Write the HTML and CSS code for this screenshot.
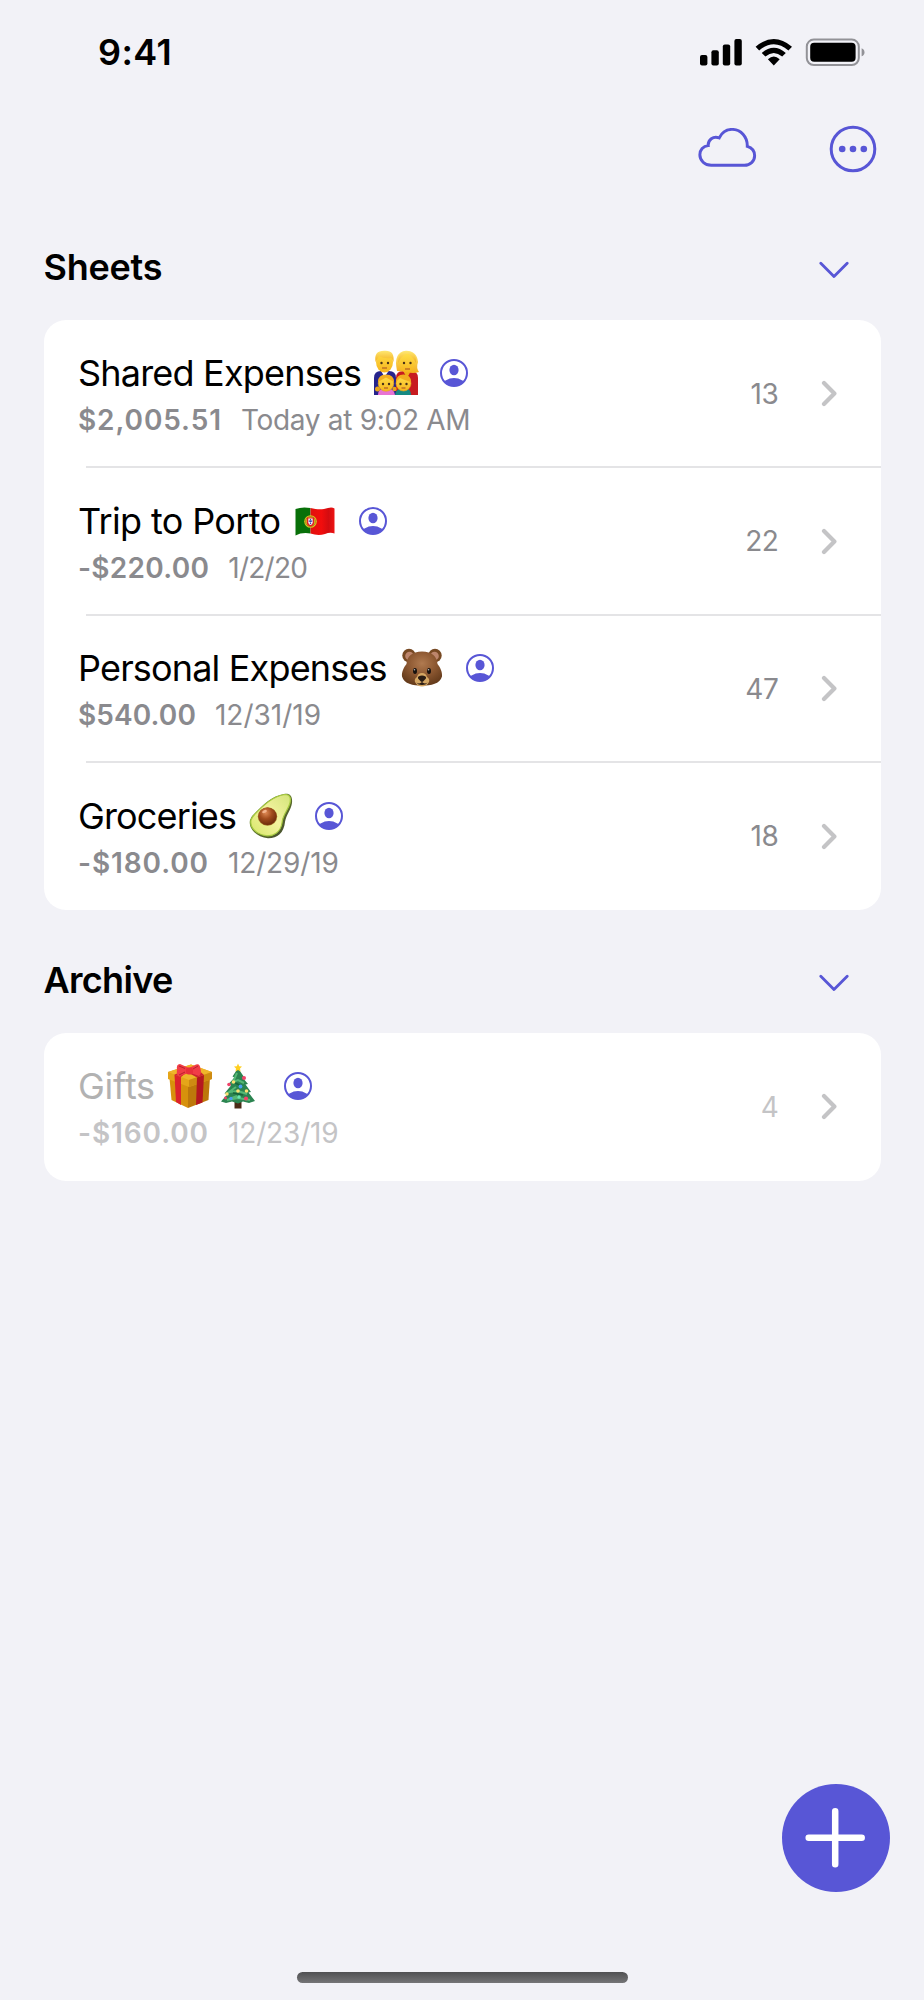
FILE: index.html
```html
<!DOCTYPE html>
<html lang="en">
<head>
<meta charset="utf-8">
<title>Sheets</title>
<link rel="stylesheet" href="styles.css">
</head>
<body>
<svg class="defs" width="0" height="0" aria-hidden="true">
  <defs>
    <symbol id="person" viewBox="0 0 28 28">
      <clipPath id="pc"><circle cx="14" cy="14" r="13"/></clipPath>
      <circle cx="14" cy="14" r="13" fill="none" stroke="#5856d6" stroke-width="2"/>
      <ellipse cx="14" cy="11" rx="4.6" ry="5.2" fill="#5856d6"/>
      <ellipse cx="14" cy="27" rx="11.2" ry="8" fill="#5856d6" clip-path="url(#pc)"/>
    </symbol>
    <symbol id="down" viewBox="0 0 30 18"><path d="M1.8 2.2 15 15.6 28.2 2.2" fill="none" stroke="#5856d6" stroke-width="2.8" stroke-linecap="round" stroke-linejoin="round"/></symbol>
    <symbol id="next" viewBox="0 0 16 27"><path d="M3 3 13.4 13.5 3 24" fill="none" stroke="#c4c4c6" stroke-width="4.2" stroke-linecap="round" stroke-linejoin="round"/></symbol>
    <linearGradient id="skin" x2="0" y2="1"><stop stop-color="#ffdf4a"/><stop offset="1" stop-color="#f6b41d"/></linearGradient>
    <linearGradient id="hair" x2="0" y2="1"><stop stop-color="#ffe873"/><stop offset="1" stop-color="#f3ae1c"/></linearGradient>
    <linearGradient id="flagr"><stop stop-color="#e0100d"/><stop offset=".45" stop-color="#f20d0d"/><stop offset=".75" stop-color="#d30c10"/><stop offset="1" stop-color="#ee1414"/></linearGradient>
    <radialGradient id="fur" cx=".5" cy=".35" r=".65"><stop stop-color="#b07a50"/><stop offset=".5" stop-color="#8f5a33"/><stop offset="1" stop-color="#663c1c"/></radialGradient>
    <radialGradient id="pit" cx=".4" cy=".3" r=".7"><stop stop-color="#e08a55"/><stop offset=".5" stop-color="#a14c1d"/><stop offset="1" stop-color="#6d2c0c"/></radialGradient>
    <linearGradient id="flesh" x1="1" y1="0" x2="0" y2="1"><stop stop-color="#d3e47a"/><stop offset=".5" stop-color="#f4f3a0"/><stop offset="1" stop-color="#d6e667"/></linearGradient>
    <linearGradient id="peel" x2="1" y2="1"><stop stop-color="#7da52c"/><stop offset=".55" stop-color="#5a6c2b"/><stop offset="1" stop-color="#3f4330"/></linearGradient>
  </defs>
</svg>
<div class="screen">
  <header class="status">
    <span class="time">9:41</span>
    <svg class="signals" viewBox="0 0 168 30" width="168" height="30">
      <rect x="1" y="18" width="7.4" height="10.5" rx="2"/><rect x="12.4" y="13.2" width="7.4" height="15.3" rx="2"/><rect x="23.8" y="7.6" width="7.4" height="20.9" rx="2"/><rect x="35.4" y="2" width="7.4" height="26.5" rx="2"/>
      <path d="M56.6 9.8Q74.8-5.6 93 9.8L89.4 13.4Q74.8.9 60.2 13.4ZM62.8 16Q74.8 5.6 86.8 16L83.2 19.6Q74.8 12.4 66.4 19.6ZM68.9 22.2Q74.8 17 80.7 22.2L74.8 28.4Z"/>
      <rect x="107.8" y="2.600" width="52" height="25.4" rx="7" fill="none" stroke="#929297" stroke-width="2"/>
      <rect x="111.2" y="5.8" width="45.4" height="19" rx="4"/>
      <path d="M162.6 11.2Q165.500 12.2 165.500 15.2T162.6 19.3Z" fill="#929297"/>
    </svg>
  </header>
  <nav class="tools">
    <svg viewBox="0 0 60 42" width="60" height="42"><path transform="translate(0 -1) scale(1.02 1)" d="M14 38.3H46.5C52 38.3 56.5 34.3 56.5 28.8 56.5 24 53.5 20.6 49.3 19.4 49.6 9.5 42.8 2.4 34.3 2.4 29 2.4 24.3 5.6 21.8 10.9 15.8 8.8 10.7 12.6 11 18.6 6 18.9 2.8 22.8 2.8 27.7 2.8 33.5 7.6 38.3 14 38.3Z" fill="none" stroke="#5856d6" stroke-width="2.9"/></svg>
    <svg viewBox="0 0 48 48" width="48" height="48"><circle cx="24" cy="24" r="21.8" fill="none" stroke="#5856d6" stroke-width="3"/><g fill="#5856d6"><circle cx="13.2" cy="24" r="3.3"/><circle cx="24" cy="24" r="3.3"/><circle cx="34.8" cy="24" r="3.3"/></g></svg>
  </nav>

  <section>
    <div class="head"><h2 class="h-sheets">Sheets</h2><svg width="30" height="18"><use href="#down"/></svg></div>
    <div class="card">
      <article class="row">
        <div class="info">
          <div class="title"><span class="name t1">Shared Expenses</span>
            <svg class="emoji" viewBox="0 0 46 46" width="46" height="46">
              <path d="M1 45V28Q1 21 8 21H16Q23 21 23 28V45Z" fill="#26248c"/><path d="M23 45V28Q23 21 30 21H38Q45 21 45 28V45Z" fill="#c71b20"/>
              <path d="M7 19 11.500 27 17 19Z" fill="#fff"/><path d="M29 19H39L34 28Z" fill="#f0ae1a"/>
              <path d="M24 21Q20 2 33 .8 44 1 45 12 43 18 46 22Q40 24 34 22Z" fill="url(#hair)"/>
              <ellipse cx="11.500" cy="12" rx="8.500" ry="10.500" fill="url(#skin)"/><path d="M2.500 12Q.5.5 11.500.7 22 0 20.500 12L18.500 8Q11 9 6 6Z" fill="url(#hair)"/>
              <ellipse cx="34" cy="13" rx="7.800" ry="9.500" fill="url(#skin)"/><path d="M25.500 13Q27 7 34 3 40 7 43 13 44 2 34 1 24 2 25.500 13Z" fill="url(#hair)"/>
              <path d="M5 45Q5 38 13 38T22 45Z" fill="#e873d3"/><path d="M22 45Q23 38 30.500 38T38 45Z" fill="#168a83"/>
              <circle cx="4.500" cy="39" r="2.500" fill="#e9a51a"/><circle cx="21.500" cy="39" r="2.200" fill="#e9a51a"/>
              <circle cx="13" cy="33.500" r="7.800" fill="url(#skin)" stroke="#e3a31b" stroke-width=".6"/><circle cx="30.500" cy="33.500" r="7.500" fill="url(#skin)" stroke="#e3a31b" stroke-width=".6"/>
              <path d="M5 32Q5 24.500 13 24.500T21 32L13 27.500Z" fill="#f2ae20"/><path d="M23 32Q23 24.500 30.500 24.500T38 32Q31 30 27 28Z" fill="#f2ae20"/>
              <g fill="#473017"><circle cx="8.500" cy="13" r="1.200"/><circle cx="15" cy="13" r="1.200"/><circle cx="31" cy="13" r="1.200"/><circle cx="37.500" cy="13" r="1.200"/><circle cx="10" cy="34" r="1.200"/><circle cx="16" cy="34" r="1.200"/><circle cx="27.500" cy="34" r="1.200"/><circle cx="33.500" cy="34" r="1.200"/></g>
              <path d="M9 18H14M32 19H37M11 38H15M28.500 38H32.500" stroke="#a34b22" stroke-width="1.200"/>
            </svg><svg class="person" width="28" height="28"><use href="#person"/></svg></div>
          <div class="sub"><b class="a1">$2,005.51</b><span class="d1">Today at 9:02 AM</span></div>
        </div>
        <span class="count">13</span><svg width="16" height="27"><use href="#next"/></svg>
      </article>
      <article class="row">
        <div class="info">
          <div class="title"><span class="name t2">Trip to Porto</span>
            <svg class="emoji" viewBox="0 0 46 46" width="46" height="46">
              <path d="M3.500 11Q10 8.500 18.500 10V35.500Q10 34 3.500 37.500Z" fill="#087009"/>
              <path d="M18.500 10C25 11.500 30 12 36 10Q40 8.800 42.500 10.500V35.500Q38 34 33 36 26 38 18.500 35.500Z" fill="url(#flagr)"/>
              <circle cx="18.500" cy="23.500" r="6.300" fill="#d9c722"/><circle cx="18.500" cy="23.500" r="5" fill="none" stroke="#a87d10" stroke-width=".8"/>
              <path d="M14.800 19.500H22.200V24.500Q22 28 18.500 28.500 15 28 14.800 24.500Z" fill="#e31d24"/><path d="M16.300 20.500H20.700V24.500Q20.500 26.500 18.500 27 16.500 26.500 16.300 24.500Z" fill="#f5f5fa"/><path d="M18.500 21V26M16.800 23.200H20.200" stroke="#3944a5" stroke-width="1.200" stroke-dasharray="1.500 .5"/>
            </svg><svg class="person" width="28" height="28"><use href="#person"/></svg></div>
          <div class="sub"><b class="a2">-$220.00</b><span class="d2">1/2/20</span></div>
        </div>
        <span class="count">22</span><svg width="16" height="27"><use href="#next"/></svg>
      </article>
      <article class="row">
        <div class="info">
          <div class="title"><span class="name t3">Personal Expenses</span>
            <svg class="emoji" viewBox="0 0 46 46" width="46" height="46">
              <circle cx="10" cy="10.500" r="6.700" fill="#774923"/><circle cx="36" cy="10.500" r="6.700" fill="#774923"/><circle cx="10.500" cy="11" r="4.300" fill="#bd856c"/><circle cx="35.500" cy="11" r="4.300" fill="#bd856c"/>
              <path d="M23 6.500C33 6.500 38 11.500 38.500 19 41 22 43.500 27 43 31.500 41 39 32 40.500 23 40.500S5 39 3 31.500C2.500 27 5 22 7.500 19 8 11.500 13 6.500 23 6.500Z" fill="url(#fur)"/>
              <path d="M23 28Q27 28 28 32 31 34 30 37 27.500 41.500 23 41.500T16 37Q15 34 18 32 19 28 23 28Z" fill="#d5a764"/>
              <path d="M19.500 31.500Q23 29.500 26.500 31.500 28 33 25.500 35 24 37 23 37T20.500 35Q18 33 19.500 31.500ZM17.500 37.500Q20.500 39.500 23 37 25.500 39.500 28.500 37.500 27 40 23 40T17.500 37.500Z" fill="#2a1c14"/>
              <ellipse cx="16" cy="26" rx="2" ry="3" fill="#17110e"/><ellipse cx="30" cy="26" rx="2" ry="3" fill="#17110e"/><circle cx="15.500" cy="24.800" r=".8" fill="#bbb"/><circle cx="29.500" cy="24.800" r=".8" fill="#bbb"/>
            </svg><svg class="person" width="28" height="28"><use href="#person"/></svg></div>
          <div class="sub"><b class="a3">$540.00</b><span class="d3">12/31/19</span></div>
        </div>
        <span class="count">47</span><svg width="16" height="27"><use href="#next"/></svg>
      </article>
      <article class="row">
        <div class="info">
          <div class="title"><span class="name t4">Groceries</span>
            <svg class="emoji" viewBox="0 0 46 46" width="46" height="46">
              <path d="M7 20C15 12 23 3 37 .8 43 .5 44.500 4 44 10 43 17 38 22 37 29 36 40 29 45.500 20 45.300 9 44 0 36 2 27Q3 23 7 20Z" fill="url(#peel)"/>
              <path d="M7.500 20.500C16 12 25 3 37 1.500 42 1.500 43 4.500 42 10 40 17 34.500 22 34 30 32.500 39 26 43.500 18 42.700 9 41.500 1.500 35 3 27Q4 24 7.500 20.500Z" fill="url(#flesh)" stroke="#a9cc42" stroke-width="1.200"/>
              <ellipse cx="19.500" cy="23.500" rx="9.700" ry="9.300" fill="#9f6b24"/><ellipse cx="19.500" cy="23.300" rx="9" ry="8.800" fill="url(#pit)"/><ellipse cx="16.500" cy="18.500" rx="2.500" ry="1.500" fill="#f3b48c" transform="rotate(-25 16.500 18.500)"/>
            </svg><svg class="person" width="28" height="28"><use href="#person"/></svg></div>
          <div class="sub"><b class="a4">-$180.00</b><span class="d4">12/29/19</span></div>
        </div>
        <span class="count">18</span><svg width="16" height="27"><use href="#next"/></svg>
      </article>
    </div>
  </section>

  <section>
    <div class="head second"><h2 class="h-archive">Archive</h2><svg width="30" height="18"><use href="#down"/></svg></div>
    <div class="card">
      <article class="row archived">
        <div class="info">
          <div class="title"><span class="name t5">Gifts</span>
            <svg class="emoji" viewBox="0 0 46 46" width="46" height="46">
              <path d="M2.500 15 21 21V45L4.500 37Z" fill="#d7910c"/><path d="M21 20 43 14 41.500 37 21 45Z" fill="#bd780b"/>
              <path d="M1 9 24 1.500 45 9V16L22 24 1 16Z" fill="#e5a519"/><path d="M1 9 22 17 45 9 24 1.500Z" fill="#efb52a"/><path d="M22 17 45 9V16L22 24Z" fill="#ce8b12"/>
              <path d="M7.500 11.500 14 14V42L9 39Z" fill="#dc222d"/><path d="M30 14.500 37 12 35.500 39.500 29 42Z" fill="#b5171f"/><path d="M7.500 11.500 28 4 37 12 30 14.500 20 9 14 14Z" fill="#cb2430"/>
              <path d="M22 5 13 1Q9 1 10 7 9 12 12 13.500L20 10.500H25L32 13Q35 10 33.500 6 33 0 29 1.500Z" fill="#f13d46"/><path d="M18 5.500 12 3M26 6 31 3M18 9 12 12" stroke="#b9222d" stroke-width="1"/><rect x="19" y="4.500" width="7" height="7" rx="2.500" fill="#e82f3b"/>
            </svg><svg class="emoji tree" viewBox="0 0 46 46" width="46" height="46">
              <path d="M19.500 36H26.500V45.500H19.500Z" fill="#4c2a16"/>
              <path d="M23 5 29 14 27.500 14.500 33 21 30.500 21.500 36 29 33.500 29.500 40 38 34 40 28 38.500 23 40.500 17 38.500 11 40 6 38.500 12.500 31 9.500 30.500 16 22.500 13 21.500 19.500 14.500 17.500 13.500Z" fill="#2b8450"/>
              <path d="M22 10 18 19 23 17 29 20M21 24 14 29 23 28 32 31M22 33 12 37 23 35 35 37" fill="none" stroke="#55b875" stroke-width="2"/><path d="M20 20 27 23M18 30 28 32" stroke="#17643a" stroke-width="1.600"/>
              <path d="M23 .5 24.200 3.200 27 3.500 25 5.600 25.500 8.500 23 7 20.500 8.500 21 5.600 19 3.500 21.800 3.200Z" fill="#ffcf20"/>
              <g fill="#f0446a"><circle cx="29" cy="15" r="2"/><circle cx="14" cy="21.500" r="1.800"/><circle cx="31" cy="35.500" r="2.100"/><circle cx="10.500" cy="35" r="1.400"/></g><g fill="#ffdf72"><circle cx="18.500" cy="19" r="1.800"/><circle cx="23" cy="28" r="1.800"/><circle cx="31.500" cy="28" r="1.800"/><circle cx="12" cy="31" r="1.700"/></g><g fill="#4b9ff0"><circle cx="25.500" cy="23.500" r="1.900"/><circle cx="16" cy="35.500" r="1.700"/></g><circle cx="24" cy="34" r="1.800" fill="#6be6b0"/>
            </svg><svg class="person" width="28" height="28"><use href="#person"/></svg></div>
          <div class="sub"><b class="a5">-$160.00</b><span class="d5">12/23/19</span></div>
        </div>
        <span class="count">4</span><svg width="16" height="27"><use href="#next"/></svg>
      </article>
    </div>
  </section>
  <footer>
    <button class="add" aria-label="Add sheet"><svg viewBox="0 0 108 108" width="108" height="108"><path d="M26.700 53.800H79.700M53.200 27.300V80.300" stroke="#fff" stroke-width="6.500" stroke-linecap="round"/></svg></button>
    <div class="home"></div>
  </footer>
</div>
</body>
</html>
```
FILE: styles.css
```css
* { box-sizing: border-box; }
body { margin: 0; background: #f2f2f7; font-family: Inter, "Liberation Sans", sans-serif; color: #000; }
svg { display: block; flex: none; }
.defs { position: absolute; }
.screen { width: 924px; height: 2000px; display: flex; flex-direction: column; }
.status { display: flex; justify-content: space-between; align-items: center; padding: 37px 57px 0 98px; height: 67px; }
.time { font-size: 36px; font-weight: 600; line-height: 30px; letter-spacing: .4px; }
.tools { display: flex; justify-content: flex-end; align-items: center; gap: 72px; height: 48px; margin-top: 58px; padding-right: 47px; }
.head { display: flex; justify-content: space-between; align-items: center; height: 44px; margin: 72px 75.5px 0 43.5px; padding-top: 3px; }
.head h2 { margin: -4px 0 0; font-size: 36px; font-weight: 600; line-height: 44px; }
.h-sheets { letter-spacing: -.25px; }
.h-archive { letter-spacing: -.7px; }
.head svg { margin-top: 2px; }
.card { margin: 31px 43.5px 0 43.5px; background: #fff; border-radius: 22px; }
.row { position: relative; display: flex; align-items: center; height: 147.5px; padding-right: 44px; }
.row + .row::before { content: ""; position: absolute; left: 42.5px; right: 0; top: -1.5px; height: 2px; background: #e4e4e6; }
.info { flex: 1; align-self: flex-start; padding: 31px 0 0 34.5px; }
.title { display: flex; align-items: center; height: 44px; }
.name { font-size: 36px; line-height: 44px; white-space: nowrap; }
.t1 { letter-spacing: -.8px; }
.t2 { letter-spacing: -.65px; }
.t3 { letter-spacing: -.83px; }
.t4 { letter-spacing: -.85px; }
.t5 { letter-spacing: -.25px; }
.emoji { margin-left: 12px; }
.tree { margin-left: 2px; }
.person { margin-left: 21px; }
.archived .person { margin-left: 23px; }
.sub { display: flex; gap: 19px; margin-top: 7px; font-size: 28px; line-height: 36px; color: #8a8a8e; white-space: nowrap; }
.sub b { font-weight: 600; letter-spacing: .9px; }
.sub .a2 { letter-spacing: .3px; }
.sub .a3 { letter-spacing: .1px; }
.d1 { letter-spacing: -.3px; }
.d2 { letter-spacing: -.75px; }
.d4, .d5 { letter-spacing: -.15px; }
.count { font-size: 28px; color: #8a8a8e; margin-right: 42px; letter-spacing: -.4px; }
.archived .name { color: #b2b2b2; }
.archived .sub, .archived .count { color: #c4c4c6; }
.second { margin-top: 48px; }
footer { margin-top: auto; display: flex; flex-direction: column; align-items: center; padding-bottom: 17px; }
.add { align-self: flex-end; width: 108px; height: 108px; margin: 0 34.5px 80px 0; padding: 0; border: 0; border-radius: 50%; background: #5856d6; }
.home { width: 331px; height: 11px; border-radius: 6px; background: linear-gradient(#505052, #757577); }
```
